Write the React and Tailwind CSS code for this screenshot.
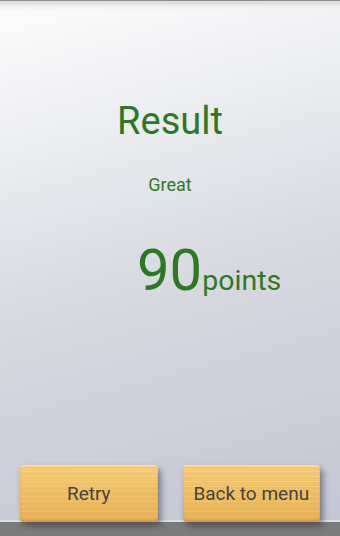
// Result screen: title, grade, score and two wooden buttons
const wood =
  "bg-[repeating-linear-gradient(180deg,rgba(255,240,200,0.18)_0px,rgba(255,240,200,0.05)_1px,rgba(180,110,20,0.12)_2px,rgba(255,255,255,0)_3px,rgba(190,120,30,0.07)_5px),linear-gradient(180deg,#f7d07c_0%,#f1c166_45%,#e8b258_100%)]"

function WoodButton({ children }) {
  return (
    <button
      className={`flex-1 h-[57px] rounded-[4px] ${wood} border-t border-[#fbe2a6] shadow-[inset_0_-2px_2px_rgba(170,110,30,0.35),3px_4px_6px_rgba(40,40,60,0.5)] text-[19px] text-[#444444] flex items-center justify-center`}
    >
      {children}
    </button>
  )
}

export default function App() {
  return (
    <div
      className="w-[340px] h-[536px] flex flex-col overflow-hidden bg-[linear-gradient(165deg,#fdfdfd_0%,#eeeff2_22%,#d6d7df_55%,#c3c5d2_100%)]"
      style={{ fontFamily: "Roboto, 'Noto Sans', sans-serif" }}
    >
      {/* top edge */}
      <div className="h-px bg-[#8e8e8e]" />
      <div className="h-[11px] bg-[linear-gradient(180deg,#d9d9d9_0%,rgba(240,240,240,0.6)_60%,rgba(255,255,255,0)_100%)]" />

      <div className="flex-1 flex flex-col">
        <div className="mt-[90px] text-center text-[38px] leading-none text-[#2b7a22]">Result</div>
        <div className="mt-[36px] text-center text-[18px] leading-none text-[#2b7a22]">Great</div>
        <div className="mt-[47px] pl-[137px] flex items-baseline text-[#2b7a22]">
          <span className="text-[58px] leading-none">90</span>
          <span className="text-[28.5px] leading-none">points</span>
        </div>
      </div>

      {/* buttons */}
      <div className="relative z-10 flex gap-[25px] px-5 -mb-0.5">
        <WoodButton>Retry</WoodButton>
        <WoodButton>Back to menu</WoodButton>
      </div>

      {/* bottom bar */}
      <div className="h-4 border-t-2 border-[#dedfe6] bg-[#7b7b7b]" />
    </div>
  )
}
